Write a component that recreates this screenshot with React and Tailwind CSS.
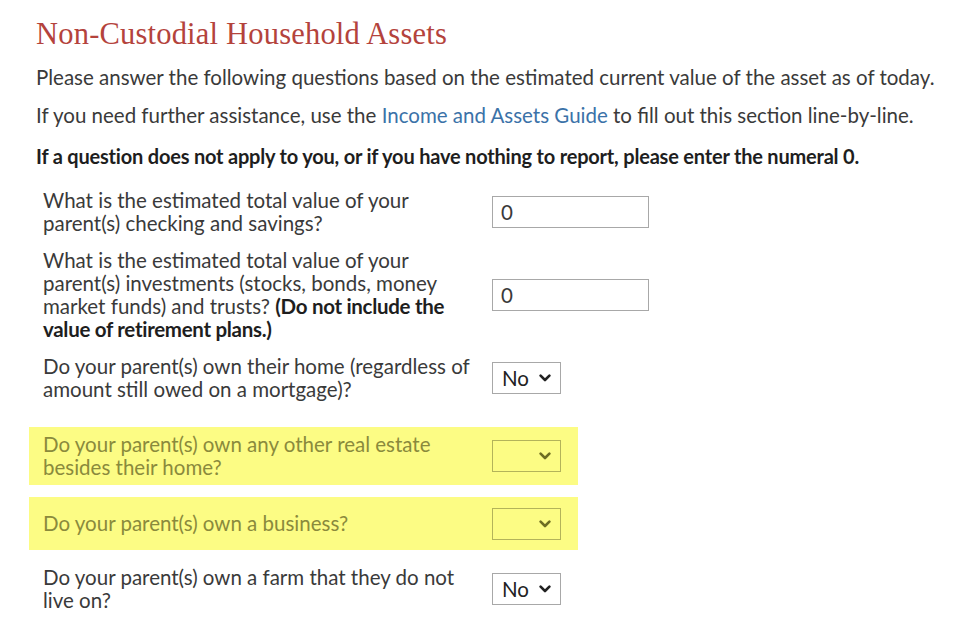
import React from 'react';

const Chevron = ({ color = '#222' }) => (
  <svg width="12" height="8" viewBox="0 0 12 8" className="shrink-0">
    <polyline points="1.6,1.6 6,6 10.4,1.6" fill="none" stroke={color} strokeWidth="2.6" strokeLinecap="round" strokeLinejoin="round" />
  </svg>
);

const TextBox = ({ value }) => (
  <div className="shrink-0 w-[157px] h-[32px] border border-[#a8a8a8] bg-white flex items-center pl-[8px] text-[20.5px] text-[#3a3a3a]">
    {value}
  </div>
);

const SelectBox = ({ value, warn }) => (
  <div
    className={
      warn
        ? 'shrink-0 w-[69px] h-[32px] border border-[#b3b35a] flex items-center justify-end pr-[9px]'
        : 'shrink-0 w-[69px] h-[32px] border border-[#a8a8a8] bg-white flex items-center justify-between pl-[9px] pr-[9px] text-[20.5px] text-[#222]'
    }
  >
    {value && <span>{value}</span>}
    <Chevron color={warn ? '#6e6e22' : '#222'} />
  </div>
);

const Row = ({ children, control, warn, className }) => (
  <div
    className={
      'flex items-center pl-[14px] ' +
      (warn ? 'w-[549px] bg-[#fcfc84] text-[#8a8a3c] ' : 'text-[#3a3a3a] ') +
      className
    }
  >
    <div className="shrink-0 w-[449px] pr-[6px] text-[20.5px] leading-[23px]">{children}</div>
    {control}
  </div>
);

export default function App() {
  return (
    <div className="bg-white w-[962px] h-[630px] pl-[36px] pt-[17px] font-['Lato',sans-serif]">
      <h2 className="font-['Liberation_Serif',serif] text-[30.5px] leading-[34px] text-[#b4433c] tracking-[0.2px]">
        Non-Custodial Household Assets
      </h2>
      <p className="mt-[14px] text-[20.5px] leading-[24px] text-[#3a3a3a]">
        Please answer the following questions based on the estimated current value of the asset as of today.
      </p>
      <p className="mt-[14px] text-[20.5px] leading-[24px] text-[#3a3a3a]">
        If you need further assistance, use the{' '}
        <a className="text-[#3b72a8]">Income and Assets Guide</a> to fill out this section line-by-line.
      </p>
      <p className="mt-[17px] text-[20px] leading-[24px] font-bold text-[#1e1e1e] tracking-[-0.2px]">
        If a question does not apply to you, or if you have nothing to report, please enter the numeral 0.
      </p>

      <div className="ml-[-7px] flex flex-col">
        <Row className="mt-[21px]" control={<TextBox value="0" />}>
          What is the estimated total value of your parent(s) checking and savings?
        </Row>
        <Row className="mt-[14px]" control={<TextBox value="0" />}>
          What is the estimated total value of your parent(s) investments (stocks, bonds, money market funds) and trusts?{' '}
          <b className="text-[#1e1e1e] tracking-[-0.3px]">(Do not include the value of retirement plans.)</b>
        </Row>
        <Row className="mt-[14px]" control={<SelectBox value="No" />}>
          Do your parent(s) own their home (regardless of amount still owed on a mortgage)?
        </Row>
        <Row warn className="mt-[26px] h-[58px]" control={<SelectBox warn />}>
          Do your parent(s) own any other real estate besides their home?
        </Row>
        <Row warn className="mt-[12px] h-[53px]" control={<SelectBox warn />}>
          Do your parent(s) own a business?
        </Row>
        <Row className="mt-[16px]" control={<SelectBox value="No" />}>
          Do your parent(s) own a farm that they do not live on?
        </Row>
      </div>
    </div>
  );
}
